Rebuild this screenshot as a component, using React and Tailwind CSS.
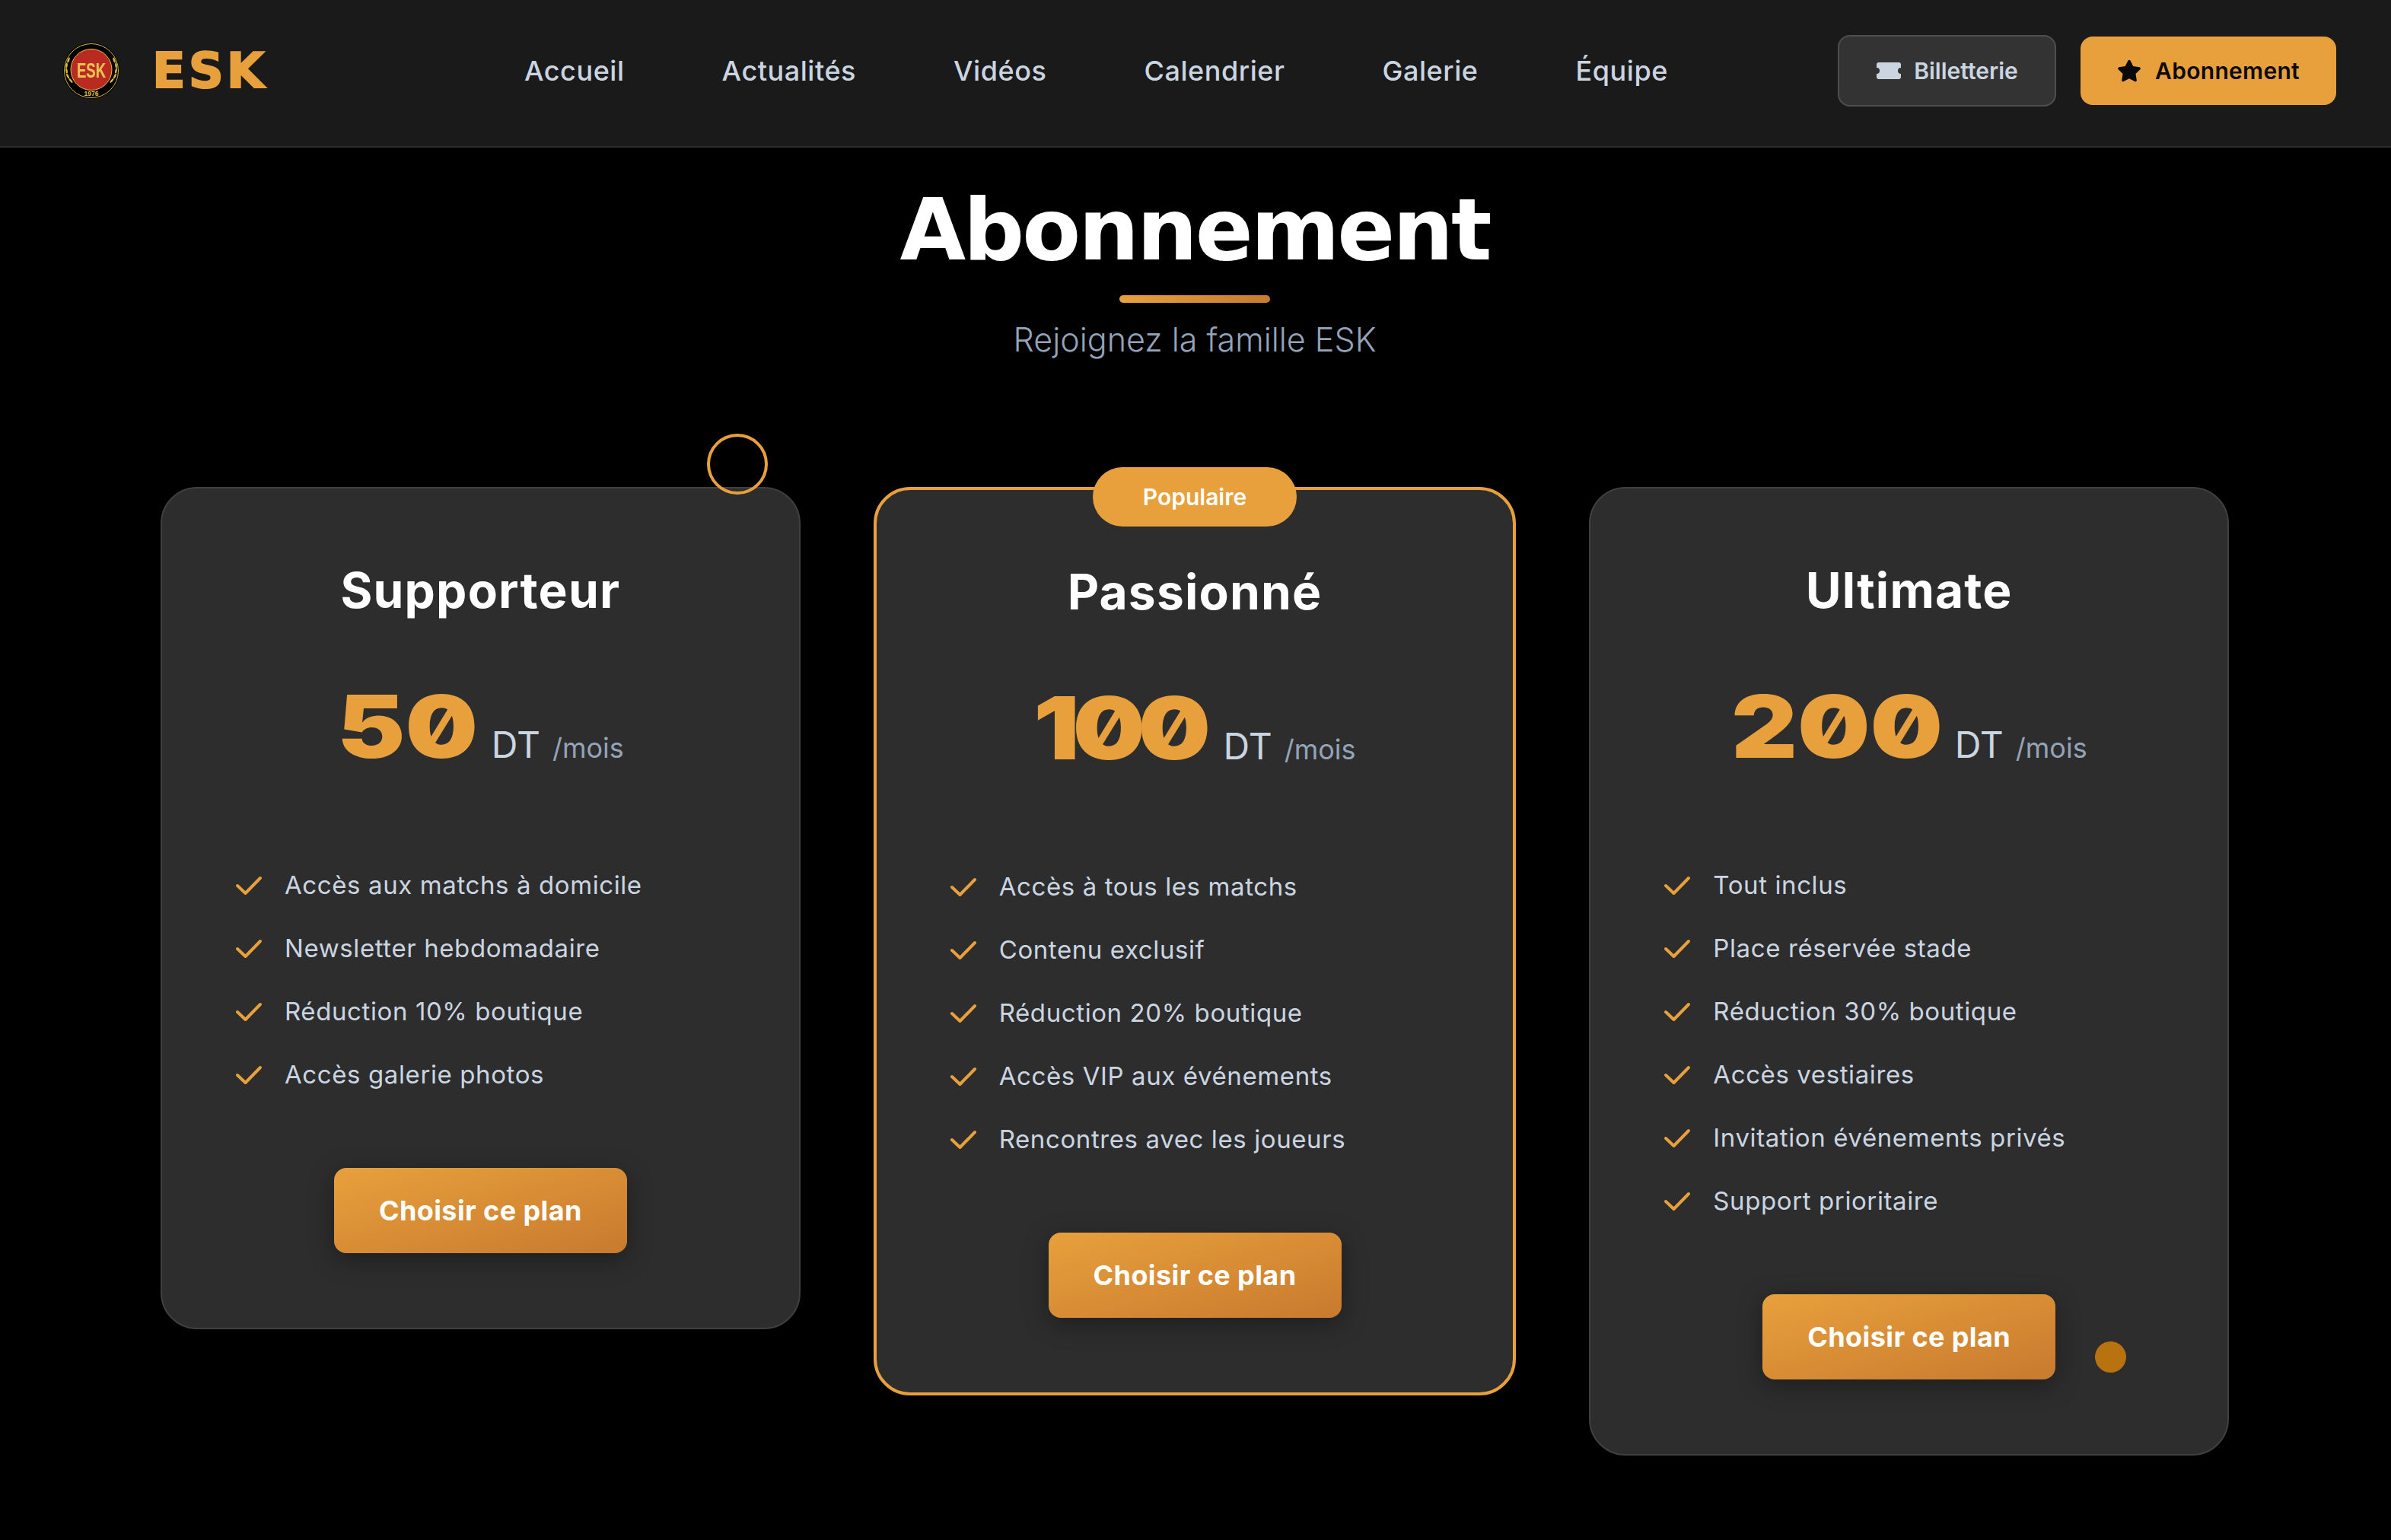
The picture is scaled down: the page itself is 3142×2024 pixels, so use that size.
import React from 'react';
import { FaStar } from 'react-icons/fa';

const body = "font-['Inter',sans-serif]";
const display = "font-['DejaVu_Sans',sans-serif]";

const NAV_LINKS = ['Accueil', 'Actualités', 'Vidéos', 'Calendrier', 'Galerie', 'Équipe'];

const PLANS = [
  {
    name: 'Supporteur',
    price: '50',
    priceWidth: 'w-[179px]',
    priceTracking: 'tracking-[0px]',
    features: ['Accès aux matchs à domicile', 'Newsletter hebdomadaire', 'Réduction 10% boutique', 'Accès galerie photos'],
  },
  {
    name: 'Passionné',
    price: '100',
    priceWidth: 'w-[225px]',
    priceTracking: 'tracking-[-8px]',
    featured: true,
    features: ['Accès à tous les matchs', 'Contenu exclusif', 'Réduction 20% boutique', 'Accès VIP aux événements', 'Rencontres avec les joueurs'],
  },
  {
    name: 'Ultimate',
    price: '200',
    priceWidth: 'w-[270px]',
    priceTracking: 'tracking-[0px]',
    features: ['Tout inclus', 'Place réservée stade', 'Réduction 30% boutique', 'Accès vestiaires', 'Invitation événements privés', 'Support prioritaire'],
  },
];

// wheat leaves around the crest, as [x, y, angle] on the left side
const LEAVES = [[8, 24, 20], [5.5, 31, 5], [5.5, 38, -10], [7, 45, -25], [11, 51, -40]];

function Logo() {
  return (
    <svg viewBox="0 0 76 76" className="w-[76px] h-[76px] shrink-0">
      <circle cx="38" cy="38" r="37" fill="#000" />
      <circle cx="38" cy="38" r="35.5" fill="none" stroke="#d9b93f" strokeWidth="1" />
      <circle cx="38" cy="36.5" r="27" fill="#b92b21" stroke="#e6c24a" strokeWidth="1" />
      <text x="38" y="46.5" textAnchor="middle" fill="#ecc355" fontSize="28" fontWeight="700" textLength="38" lengthAdjust="spacingAndGlyphs" fontFamily="Liberation Sans, sans-serif">ESK</text>
      <text x="38" y="71" textAnchor="middle" fill="#e6c24a" fontSize="8.5" fontWeight="700" textLength="19" fontFamily="Liberation Sans, sans-serif">1976</text>
      {LEAVES.map(([x, y, a]) => (
        <g key={y} fill="#d9b93f">
          <ellipse cx={x} cy={y} rx="1.3" ry="3.6" transform={`rotate(${a} ${x} ${y})`} />
          <ellipse cx={76 - x} cy={y} rx="1.3" ry="3.6" transform={`rotate(${-a} ${76 - x} ${y})`} />
        </g>
      ))}
    </svg>
  );
}

function TicketIcon() {
  return (
    <svg viewBox="0 0 34 24" className="w-[34px] h-[24px]" fill="#cbd5e1">
      <path d="M4 1h26a3 3 0 0 1 3 3v4a4 4 0 0 0 0 8v4a3 3 0 0 1-3 3H4a3 3 0 0 1-3-3v-4a4 4 0 0 0 0-8V4a3 3 0 0 1 3-3z" />
    </svg>
  );
}

function CheckIcon() {
  return (
    <svg viewBox="0 0 36 26" className="w-[36px] h-[26px] shrink-0" fill="none" stroke="#e8a03c" strokeWidth="4" strokeLinecap="round" strokeLinejoin="round">
      <path d="M3 13l10.5 10L33 3" />
    </svg>
  );
}

function Navbar() {
  return (
    <header className="h-[194px] bg-[#1a1a1a] border-b-2 border-[#2d2d2d] flex items-center pl-[82px] pr-[72px] pb-[6px]">
      <div className="flex items-center gap-[42px] w-[272px]">
        <Logo />
        <span className={`${display} text-[64px] leading-none font-bold tracking-[4px] text-[#e8a03c] [-webkit-text-stroke:2px_#e8a03c]`}>ESK</span>
      </div>
      <nav className="flex items-center gap-[128px] ml-[335px]">
        {NAV_LINKS.map((link) => (
          <a key={link} className="text-[36px] font-medium text-[#cbd5e1] tracking-[0.55px]">{link}</a>
        ))}
      </nav>
      <div className="ml-auto flex items-center gap-[32px]">
        <button className="h-[94px] w-[287px] flex items-center justify-center gap-[16px] rounded-[16px] bg-[#333] border-2 border-[#4f4f4f] text-[#cbd5e1] text-[30px] font-semibold">
          <TicketIcon />
          Billetterie
        </button>
        <button className="h-[90px] w-[336px] flex items-center justify-center gap-[18px] rounded-[16px] bg-[#e8a03c] text-[#0a0a0a] text-[30px] font-semibold tracking-[0.3px]">
          <FaStar className="w-[32px] h-[32px]" />
          Abonnement
        </button>
      </div>
    </header>
  );
}

function PlanCard({ plan }) {
  const border = plan.featured ? 'border-[4px] border-[#e8a03c]' : 'border-2 border-[#404040]';
  return (
    <article className={`relative flex-1 rounded-[48px] bg-[#2d2d2d] ${border} pt-[98px] pb-[98px] px-[96px] flex flex-col items-center`}>
      {plan.featured && (
        <span className="absolute -top-[30px] left-1/2 -translate-x-1/2 h-[78px] w-[268px] rounded-full bg-[#e8a03c] text-white text-[30px] font-semibold flex items-center justify-center">
          Populaire
        </span>
      )}
      <h3 className="text-[64px] leading-[72px] font-bold text-white tracking-[1.2px]">{plan.name}</h3>
      <div className="mt-[78px] flex items-baseline h-[130px]">
        {/* the digits are stretched to the wide look of the original numerals */}
        <span className={`${plan.priceWidth} block`}>
          <span className={`${plan.priceTracking} inline-block origin-left scale-x-[1.18] whitespace-nowrap slashed-zero text-[114px] leading-[130px] font-black text-[#e8a03c]`}>{plan.price}</span>
        </span>
        <span className="ml-[24px] text-[48px] text-[#cbd5e1]">DT</span>
        <span className="ml-[16px] text-[36px] text-[#94a3b8]">/mois</span>
      </div>
      <ul className="mt-[122px] w-full flex flex-col gap-[39px]">
        {plan.features.map((feature) => (
          <li key={feature} className="flex items-center gap-[29px] h-[44px] text-[33px] text-[#cbd5e1] tracking-[0.6px]">
            <CheckIcon />
            {feature}
          </li>
        ))}
      </ul>
      <button className="mt-[100px] h-[112px] w-[385px] rounded-[16px] bg-linear-to-br from-[#e8a03c] to-[#c87a2e] text-white text-[36px] font-bold tracking-[0.4px] shadow-[0_8px_32px_rgba(0,0,0,0.35)]">
        Choisir ce plan
      </button>
    </article>
  );
}

export default function App() {
  return (
    <div className={`${body} bg-black min-h-[2024px]`}>
      <Navbar />
      <main className="relative w-[2718px] ml-[211px]">
        <section className="flex flex-col items-center pt-[48px]">
          <h1 className={`${display} text-[112px] leading-[120px] font-bold text-white tracking-[-3px]`}>Abonnement</h1>
          <div className="mt-[26px] w-[198px] h-[10px] rounded-full bg-linear-to-r from-[#e8a03c] to-[#c87a2e]" />
          <p className="mt-[18px] text-[43px] leading-[60px] font-light text-[#94a3b8]">Rejoignez la famille ESK</p>
        </section>
        <div className="mt-[164px] flex items-start gap-[96px]">
          {PLANS.map((plan) => <PlanCard key={plan.name} plan={plan} />)}
        </div>
        {/* floating decorations */}
        <span className="absolute left-[718px] top-[376px] w-[80px] h-[80px] rounded-full border-[4px] border-[#e8a03c]" />
        <span className="absolute left-[2542px] top-[1569px] w-[41px] h-[41px] rounded-full bg-[#b8720f]" />
      </main>
    </div>
  );
}
